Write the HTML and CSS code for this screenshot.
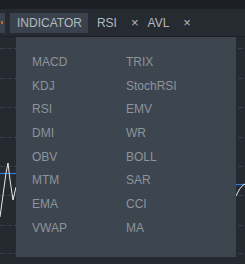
FILE: index.html
```html
<!DOCTYPE html>
<html lang="en">
<head>
  <meta charset="UTF-8">
  <title>Indicator</title>
  <link rel="stylesheet" href="styles.css">
</head>
<body>

  <div class="topstrip"></div>

  <div class="toolbar">
    <div class="tab stub"><span class="dot"></span></div>
    <div class="tab active">INDICATOR</div>
    <div class="tag">RSI</div>
    <div class="close">×</div>
    <div class="tag">AVL</div>
    <div class="close">×</div>
  </div>

  <div class="chart">
    <svg class="plot" width="245" height="227" viewBox="0 0 245 227">
      <g stroke="#3a4049" stroke-width="1" stroke-dasharray="5 2">
        <line x1="0" y1="11.5" x2="245" y2="11.5"/>
        <line x1="0" y1="41.5" x2="245" y2="41.5"/>
        <line x1="0" y1="70.5" x2="245" y2="70.5"/>
        <line x1="0" y1="100.5" x2="245" y2="100.5"/>
        <line x1="0" y1="129.5" x2="245" y2="129.5"/>
        <line x1="0" y1="158.5" x2="245" y2="158.5"/>
        <line x1="0" y1="188.5" x2="245" y2="188.5"/>
        <line x1="0" y1="216.5" x2="245" y2="216.5"/>
      </g>
      <line x1="0" y1="136.5" x2="16" y2="136.5" stroke="#2f7fd8" stroke-width="1.2"/>
      <line x1="236" y1="147.5" x2="245" y2="147.5" stroke="#2f7fd8" stroke-width="1.2"/>
      <polyline points="0,180 3,158 6,136 8,126 10,143 13,163 16,150" fill="none" stroke="#e6e8ea" stroke-width="1"/>
      <polyline points="236,159 239,153 242,149 245,147" fill="none" stroke="#e6e8ea" stroke-width="1"/>
    </svg>

    <div class="menu">
      <div class="col">
        <div class="item">MACD</div>
        <div class="item">KDJ</div>
        <div class="item">RSI</div>
        <div class="item">DMI</div>
        <div class="item">OBV</div>
        <div class="item">MTM</div>
        <div class="item">EMA</div>
        <div class="item">VWAP</div>
      </div>
      <div class="col">
        <div class="item">TRIX</div>
        <div class="item">StochRSI</div>
        <div class="item">EMV</div>
        <div class="item">WR</div>
        <div class="item">BOLL</div>
        <div class="item">SAR</div>
        <div class="item">CCI</div>
        <div class="item">MA</div>
      </div>
    </div>
  </div>

</body>
</html>
```

FILE: styles.css
```css
html, body { margin: 0; padding: 0; }
body {
  width: 245px;
  height: 264px;
  overflow: hidden;
  background: #252930;
  font-family: "Liberation Sans", Arial, sans-serif;
}
.topstrip { height: 9px; background: #1c1f24; }
.toolbar {
  height: 27px;
  display: flex;
  align-items: center;
  background: #262a31;
  border-bottom: 1px solid #1c1f24;
  font-size: 12px;
  color: #b4b9bf;
}
.tab { height: 20px; background: #3a434d; display: flex; align-items: center; }
.stub { width: 5px; position: relative; }
.dot { width: 2px; height: 3px; background: #c8642c; margin-left: 1px; }
.active { margin-left: 5px; padding: 0 6px 0 7px; }
.tag { margin-left: 9px; }
.close { margin-left: 14px; font-size: 13px; }
.chart { position: relative; height: 227px; }
.plot { display: block; }
.menu {
  position: absolute;
  left: 16px;
  top: 0;
  width: 188px;
  height: 190px;
  padding: 14px 16px 16px 16px;
  background: #3d454f;
  display: flex;
  font-size: 12px;
  color: #8d949c;
}
.col { width: 96px; }
.item { height: 23.7px; line-height: 23.7px; }
```
